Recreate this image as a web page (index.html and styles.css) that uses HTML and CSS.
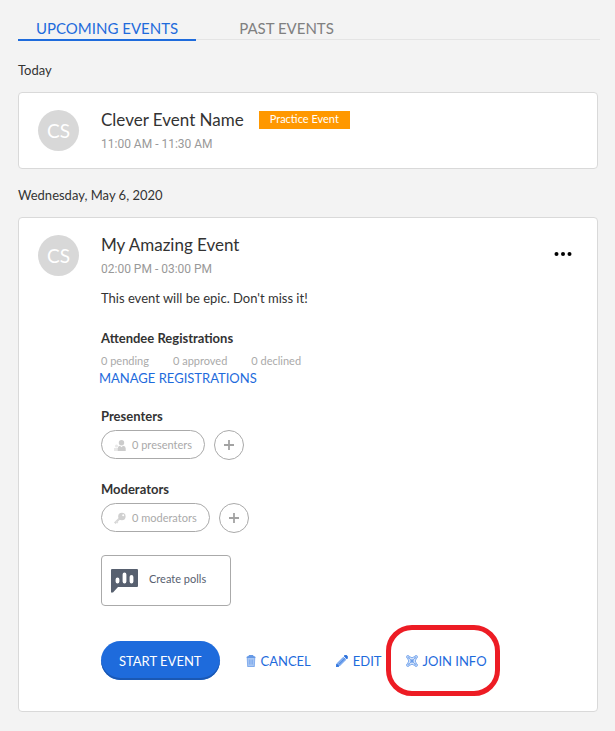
FILE: index.html
```html
<!DOCTYPE html>
<html lang="en">
<head>
<meta charset="utf-8">
<meta name="viewport" content="width=device-width, initial-scale=1">
<title>Events</title>
<link rel="stylesheet" href="styles.css">
</head>
<body>
<nav class="tabs">
  <a class="tab tab-active" href="#upcoming">UPCOMING EVENTS</a>
  <a class="tab" href="#past">PAST EVENTS</a>
</nav>
<main>
  <h2 class="day">Today</h2>
  <article class="card">
    <div class="avatar">CS</div>
    <div class="details">
      <div class="title-row">
        <h3 class="title">Clever Event Name</h3>
        <span class="badge">Practice Event</span>
      </div>
      <p class="time">11:00 AM - 11:30 AM</p>
    </div>
  </article>

  <h2 class="day">Wednesday, May 6, 2020</h2>
  <article class="card card-open">
    <div class="avatar">CS</div>
    <div class="details">
      <h3 class="title">My Amazing Event</h3>
      <p class="time">02:00 PM - 03:00 PM</p>
      <p class="description">This event will be epic. Don't miss it!</p>

      <section class="group">
        <h4 class="heading">Attendee Registrations</h4>
        <div class="counts">
          <span>0 pending</span><span>0 approved</span><span>0 declined</span>
        </div>
        <a class="manage" href="#registrations">MANAGE REGISTRATIONS</a>
      </section>

      <section class="group">
        <h4 class="heading">Presenters</h4>
        <div class="people">
          <button class="pill" type="button">
            <svg width="12" height="12" viewBox="0 0 12 12" aria-hidden="true"><g fill="#e8e8e8"><circle cx="2.500" cy="7" r="1.500"/><path d="M0 12V9h4v3z"/></g><g fill="#cccccc"><circle cx="7.500" cy="3.700" r="2.700"/><path d="M3.800 12V9.200q0-2 2.200-2.400l1.500 1.400L9 6.800q2.700.4 2.700 2.400V12z"/></g></svg>
            0 presenters
          </button>
          <button class="add" type="button" aria-label="Add presenter"><svg width="10" height="10" viewBox="0 0 10 10" aria-hidden="true"><path d="M5 0v10M0 5h10" stroke="#a3a3a3" stroke-width="1.800"/></svg></button>
        </div>
      </section>

      <section class="group">
        <h4 class="heading">Moderators</h4>
        <div class="people">
          <button class="pill" type="button">
            <svg width="12" height="12" viewBox="0 0 12 12" aria-hidden="true"><path d="M5.500 6.500L.8 11.200" stroke="#d6d6d6" stroke-width="2.200"/><path d="M1.800 9l2 2" stroke="#dedede" stroke-width="1.500"/><circle cx="7.900" cy="4.500" r="3.700" fill="#d0d0d0"/><circle cx="9.200" cy="3.200" r="1" fill="#fff"/></svg>
            0 moderators
          </button>
          <button class="add" type="button" aria-label="Add moderator"><svg width="10" height="10" viewBox="0 0 10 10" aria-hidden="true"><path d="M5 0v10M0 5h10" stroke="#a3a3a3" stroke-width="1.800"/></svg></button>
        </div>
      </section>

      <button class="polls" type="button">
        <svg width="27" height="24" viewBox="0 0 27 24" aria-hidden="true"><path d="M1 0h25q1 0 1 1v16q0 1-1 1H7l-5 5.500H0V1q0-1 1-1z" fill="#57606f"/><path d="M6.500 10.500v2M13.500 5.500v7M20.500 8v4.500" stroke="#fff" stroke-width="3.800" stroke-linecap="round"/></svg>
        <span class="polls-label">Create polls</span>
      </button>

      <div class="actions">
        <button class="start" type="button">START EVENT</button>
        <a class="action cancel" href="#cancel">
          <svg width="10" height="12" viewBox="0 0 10 12" aria-hidden="true"><path d="M1 3h8l-.5 9h-7z" fill="#a9c7f3"/><path d="M1.200 2.500l.5 9h6.600l.5-9M3.400 4.500v5M5 4.500v5M6.600 4.500v5" fill="none" stroke="#77a5eb" stroke-width=".8"/><path d="M.5 3Q.3 1 2.500 1L3 0h4l.5 1q2.200 0 2 2z" fill="#6699e6"/></svg>
          CANCEL
        </a>
        <a class="action edit" href="#edit">
          <svg width="12" height="12" viewBox="0 0 12 12" aria-hidden="true"><path d="M1 8l6.300-6.300 3 3L4 11l-3.700.8z" fill="#7facef"/><path d="M3 9.300l6.200-6.200M8 1l1-.8q1-.5 2 .5t.6 2L11 4zM0 12l.7-3 2.300 2.300z" fill="#2b70dc" stroke="#2b70dc" stroke-width=".7"/></svg>
          EDIT
        </a>
        <a class="action join" href="#join">
          <svg width="12" height="12" viewBox="0 0 12 12" aria-hidden="true"><path d="M2 2h8v8H2z" fill="#d5e4fa"/><g fill="#c4d9f8" stroke="#78a7ed" stroke-width=".9"><circle cx="1.900" cy="1.900" r="1.400"/><circle cx="10.100" cy="1.900" r="1.400"/><circle cx="1.900" cy="10.100" r="1.400"/><circle cx="10.100" cy="10.100" r="1.400"/></g><path d="M2.500 2.500l7 7M9.500 2.500l-7 7M3.300 1.500Q6 4 8.700 1.500M3.300 10.500Q6 8 8.700 10.500M1.500 3.300Q4 6 1.500 8.700M10.500 3.300Q8 6 10.500 8.700" fill="none" stroke="#78a7ed" stroke-width=".9"/><circle cx="6" cy="6" r="1.700" fill="#6b9eea"/></svg>
          JOIN INFO
        </a>
      </div>
    </div>
    <button class="more" type="button" aria-label="More options"><svg width="18" height="4" viewBox="0 0 18 4" aria-hidden="true"><circle cx="2.500" cy="2" r="2"/><circle cx="9" cy="2" r="2"/><circle cx="15.500" cy="2" r="2"/></svg></button>
  </article>
</main>
</body>
</html>
```
FILE: styles.css
```css
* { box-sizing: border-box; }

body {
  margin: 0;
  padding: 16px 17px 19px 18px;
  background: #f3f3f3;
  color: #333;
  font-family: Lato, "Liberation Sans", sans-serif;
  font-size: 13px;
  line-height: 20px;
}

h2, h3, h4, p { margin: 0; font-weight: 400; }
a { color: #1e6bdc; text-decoration: none; }
button { margin: 0; font: inherit; background: #fff; cursor: pointer; }
svg { display: block; flex: none; }

.tabs {
  display: flex;
  margin-right: -2px;
  background: linear-gradient(#e4e4e4, #e4e4e4) 0 23px / 100% 1px no-repeat;
}
.tab {
  padding: 0 18px;
  height: 25px;
  line-height: 24px;
  font-size: 15px;
  color: #808080;
}
.tab + .tab { margin-left: 25px; }
.tab-active {
  color: #1e6bdc;
  border-bottom: 2px solid #1e6bdc;
}

.day {
  margin: 19px 0 12px;
  font-size: 13px;
}
.card + .day { margin: 16px 0 12px; }

.card {
  display: flex;
  padding: 15px 19px 14px;
  background: #fff;
  border: 1px solid #d9d9d9;
  border-radius: 4px;
}
.card-open { padding-bottom: 31px; }

.avatar {
  flex: none;
  width: 41px;
  height: 41px;
  margin: 2px 22px 0 0;
  border-radius: 50%;
  background: #d8d8d8;
  color: #fff;
  font-size: 19px;
  line-height: 41px;
  text-align: center;
}
.details { flex: 1; min-width: 0; }
.title-row { display: flex; align-items: center; gap: 15px; }
.title { font-size: 17px; line-height: 24px; }
.badge {
  height: 18px;
  padding: 0 11px;
  background: #ff9800;
  color: #fff;
  font-size: 11px;
  line-height: 15px;
}
.time { margin-top: 2px; font-family: Roboto, sans-serif; font-size: 12px; color: #999; }
.description { margin-top: 9px; }

.group { margin-top: 20px; }
.group + .group { margin-top: 19px; }
.heading { font-size: 13px; font-weight: 700; }
.counts {
  display: flex;
  gap: 24px;
  margin-top: 5px;
  color: #aaa;
  font-size: 11px;
  line-height: 16px;
}
.manage { display: block; margin-left: -2px; line-height: 18px; }

.people { display: flex; gap: 9px; margin-top: 4px; height: 30px; }
.pill {
  display: flex;
  align-items: center;
  gap: 6px;
  height: 29px;
  padding: 0 12px;
  border: 1px solid #aaa;
  border-radius: 15px;
  color: #aaa;
  font-size: 11px;
}
.add {
  display: flex;
  align-items: center;
  justify-content: center;
  width: 30px;
  height: 30px;
  padding: 0;
  border: 1px solid #aaa;
  border-radius: 50%;
}

.polls {
  display: flex;
  align-items: center;
  gap: 11px;
  width: 130px;
  height: 51px;
  margin-top: 22px;
  padding: 0 9px;
  border: 1px solid #aaa;
  border-radius: 4px;
  color: #57606f;
  font-size: 11px;
}
.polls-label { padding-bottom: 4px; }

.actions { display: flex; align-items: center; margin-top: 35px; }
.start {
  height: 39px;
  padding: 0 18px;
  border: 0;
  border-radius: 20px;
  background: #1e6bdc;
  box-shadow: inset 0 -2px #1a58b4;
  color: #fff;
  white-space: nowrap;
}
.action { display: flex; align-items: center; gap: 5px; white-space: nowrap; }
.cancel { margin-left: 26px; }
.edit { margin-left: 25px; }
.join { position: relative; margin-left: 24px; }
.join::after {
  content: "";
  position: absolute;
  inset: -26px -13px -25px -20px;
  border: 5px solid #ed1c24;
  border-radius: 26px;
  pointer-events: none;
}

.more {
  align-self: flex-start;
  margin-top: 15px;
  padding: 4px 6px;
  border: 0;
}
```
